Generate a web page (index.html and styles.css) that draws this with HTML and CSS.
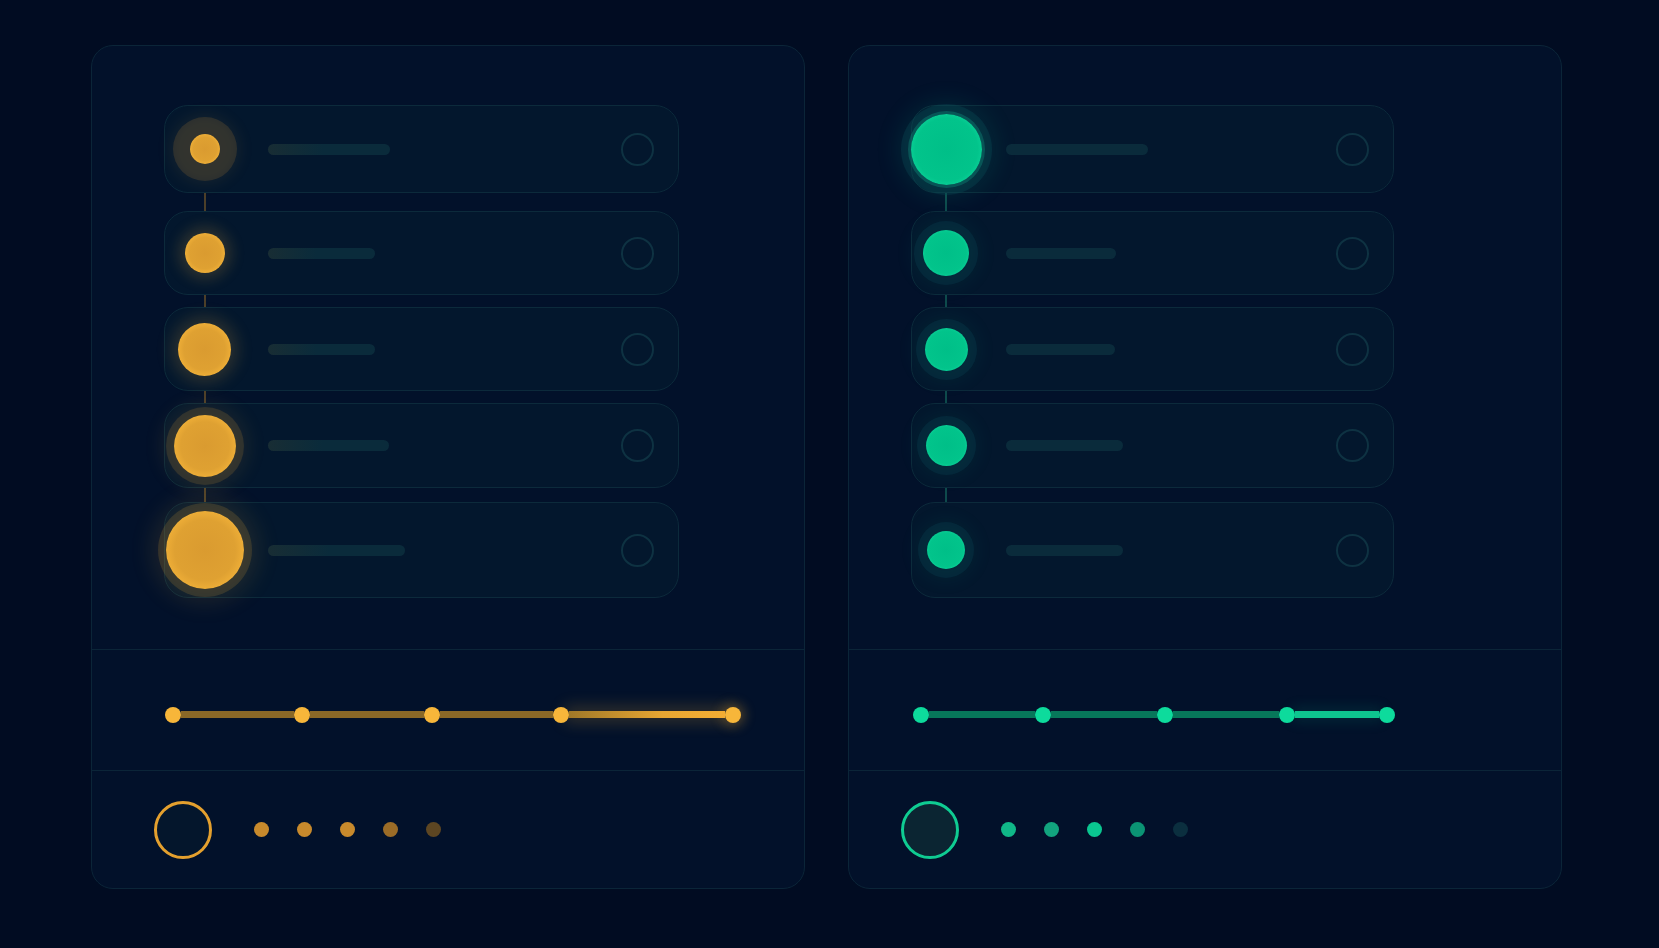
FILE: index.html
```html
<!DOCTYPE html>
<html lang="es">
<head>
    <meta charset="UTF-8">
    <meta name="viewport" content="width=device-width, initial-scale=1.0">
    <title>Pasos</title>
    <link rel="stylesheet" href="styles.css">
</head>
<body>
    <div class="tablero">
        <!-- panel ambar -->
        <section class="panel ambar">
            <div class="lista">
                <div class="fila f1">
                    <span class="hueco"><span class="punto p1"></span></span>
                    <span class="barra" style="width: 122px;"></span>
                    <span class="aro"></span>
                </div>
                <div class="fila f2">
                    <span class="hueco"><span class="punto p2"></span></span>
                    <span class="barra" style="width: 107px;"></span>
                    <span class="aro"></span>
                </div>
                <div class="fila f3">
                    <span class="hueco"><span class="punto p3"></span></span>
                    <span class="barra" style="width: 107px;"></span>
                    <span class="aro"></span>
                </div>
                <div class="fila f4">
                    <span class="hueco"><span class="punto p4"></span></span>
                    <span class="barra" style="width: 121px;"></span>
                    <span class="aro"></span>
                </div>
                <div class="fila f5">
                    <span class="hueco"><span class="punto p5"></span></span>
                    <span class="barra" style="width: 137px;"></span>
                    <span class="aro"></span>
                </div>
            </div>
            <div class="deslizador">
                <div class="pista">
                    <span class="nodo"></span><span class="tramo"></span>
                    <span class="nodo"></span><span class="tramo"></span>
                    <span class="nodo"></span><span class="tramo"></span>
                    <span class="nodo"></span><span class="tramo final"></span>
                    <span class="nodo ultimo"></span>
                </div>
            </div>
            <div class="pie">
                <span class="anillo"></span>
                <div class="puntos">
                    <span class="d1"></span>
                    <span class="d2"></span>
                    <span class="d3"></span>
                    <span class="d4"></span>
                    <span class="d5"></span>
                </div>
            </div>
        </section>

        <!-- panel verde -->
        <section class="panel verde">
            <div class="lista">
                <div class="fila f1">
                    <span class="hueco"><span class="punto p1"></span></span>
                    <span class="barra" style="width: 142px;"></span>
                    <span class="aro"></span>
                </div>
                <div class="fila f2">
                    <span class="hueco"><span class="punto p2"></span></span>
                    <span class="barra" style="width: 110px;"></span>
                    <span class="aro"></span>
                </div>
                <div class="fila f3">
                    <span class="hueco"><span class="punto p3"></span></span>
                    <span class="barra" style="width: 109px;"></span>
                    <span class="aro"></span>
                </div>
                <div class="fila f4">
                    <span class="hueco"><span class="punto p4"></span></span>
                    <span class="barra" style="width: 117px;"></span>
                    <span class="aro"></span>
                </div>
                <div class="fila f5">
                    <span class="hueco"><span class="punto p5"></span></span>
                    <span class="barra" style="width: 117px;"></span>
                    <span class="aro"></span>
                </div>
            </div>
            <div class="deslizador">
                <div class="pista">
                    <span class="nodo"></span><span class="tramo"></span>
                    <span class="nodo"></span><span class="tramo"></span>
                    <span class="nodo"></span><span class="tramo"></span>
                    <span class="nodo"></span><span class="tramo final"></span>
                    <span class="nodo ultimo"></span>
                </div>
            </div>
            <div class="pie">
                <span class="anillo"></span>
                <div class="puntos">
                    <span class="d1"></span>
                    <span class="d2"></span>
                    <span class="d3"></span>
                    <span class="d4"></span>
                    <span class="d5"></span>
                </div>
            </div>
        </section>
    </div>
</body>
</html>
```

FILE: styles.css
```css
body {
    font-family: 'Liberation Sans', sans-serif;
    background: #010c22;
    margin: 0;
    height: 948px;
    overflow: hidden;
}

.tablero {
    display: flex;
    gap: 43px;
    padding: 45px 0 0 91px;
}

.panel {
    width: 714px;
    height: 844px;
    box-sizing: border-box;
    border: 1px solid #0b2538;
    border-radius: 22px;
    background: #02112a;
    display: flex;
    flex-direction: column;
    overflow: hidden;
}

/* lista de pasos */
.lista {
    position: relative;
    flex: none;
    height: 603px;
    box-sizing: border-box;
    display: flex;
    flex-direction: column;
    gap: 12px;
}

.ambar .lista {
    padding: 59px 125px 0 72px;
}

.verde .lista {
    padding: 59px 167px 0 62px;
}

/* linea que une los pasos */
.lista::before {
    content: "";
    position: absolute;
    top: 103px;
    height: 401px;
    width: 2px;
}

.ambar .lista::before {
    left: 112px;
    background: #4c3f29;
}

.verde .lista::before {
    left: 96px;
    background: #0e4a4c;
}

.fila {
    position: relative;
    z-index: 1;
    display: flex;
    align-items: center;
    box-sizing: border-box;
    background: #03172d;
    border: 1.5px solid #0c2a3b;
    border-radius: 24px;
    padding-right: 24px;
    flex: none;
}

.f1 { height: 88px; margin-bottom: 6px; }
.f2 { height: 84px; }
.f3 { height: 84px; }
.f4 { height: 85px; margin-bottom: 2px; }
.f5 { height: 96px; }

.hueco {
    flex: none;
    display: flex;
    justify-content: center;
    align-items: center;
}

.ambar .hueco { width: 79px; }
.verde .hueco { width: 68px; }

.barra {
    flex: none;
    height: 11px;
    border-radius: 6px;
    background: #0a2b3b;
}

.ambar .barra {
    margin-left: 24px;
    background: linear-gradient(90deg, #182d34 0%, #0a2b3b 45%);
}

.verde .barra {
    margin-left: 26px;
}

.aro {
    margin-left: auto;
    width: 33px;
    height: 33px;
    box-sizing: border-box;
    border: 2px solid #0e3242;
    border-radius: 50%;
}

/* circulos */
.punto {
    flex: none;
    border-radius: 50%;
}

.ambar .punto {
    background: radial-gradient(circle, #da9b30 0%, #dfa132 55%, #f5b43a 80%, #fcbd3c 100%);
}

.ambar .p1 {
    width: 30px;
    height: 30px;
    box-shadow: 0 0 0 17px rgba(160, 120, 50, 0.22), 0 0 16px 20px rgba(240, 170, 60, 0.08);
}

.ambar .p2 {
    width: 40px;
    height: 40px;
    box-shadow: 0 0 14px 7px rgba(240, 170, 60, 0.17);
}

.ambar .p3 {
    width: 53px;
    height: 53px;
    box-shadow: 0 0 16px 7px rgba(240, 170, 60, 0.17);
}

.ambar .p4 {
    width: 62px;
    height: 62px;
    box-shadow: 0 0 0 8px rgba(160, 120, 50, 0.22), 0 0 20px 12px rgba(240, 170, 60, 0.1);
}

.ambar .p5 {
    width: 78px;
    height: 78px;
    box-shadow: 0 0 0 8px rgba(160, 120, 50, 0.24), 0 0 24px 14px rgba(240, 170, 60, 0.12);
}

.verde .punto {
    width: 46px;
    height: 46px;
    background: radial-gradient(circle, #00bf88 0%, #02c48b 62%, #10d9a0 84%, #2af0ba 100%);
    box-shadow: 0 0 0 9px rgba(8, 62, 76, 0.35), 0 0 20px 12px rgba(20, 200, 160, 0.06);
}

.verde .p1 {
    width: 71px;
    height: 71px;
    box-shadow: 0 0 0 3px rgba(20, 170, 140, 0.3), 0 0 0 10px rgba(8, 70, 80, 0.4), 0 0 26px 12px rgba(20, 200, 160, 0.12);
}

.verde .p3 { width: 43px; height: 43px; }
.verde .p4 { width: 41px; height: 41px; }
.verde .p5 { width: 38px; height: 38px; }

/* deslizador */
.deslizador {
    flex: none;
    height: 121px;
    box-sizing: border-box;
    border-top: 1px solid #0b2538;
    display: flex;
    align-items: center;
    padding-top: 9px;
}

.ambar .deslizador { padding-left: 73px; }
.verde .deslizador { padding-left: 64px; }

.pista {
    display: flex;
    align-items: center;
}

.ambar .pista { width: 576px; }
.verde .pista { width: 482px; }

.nodo {
    position: relative;
    z-index: 1;
    flex: none;
    width: 16px;
    height: 16px;
    border-radius: 50%;
}

.tramo {
    flex: 1;
    height: 7px;
}

.ambar .nodo { background: #f7b63a; }
.ambar .tramo { background: #8a6827; }
.ambar .tramo.final {
    flex: none;
    width: 156px;
    background: linear-gradient(90deg, #a07828 0%, #e8a632 60%, #f5ae34 100%);
    box-shadow: 0 0 16px 5px rgba(240, 170, 50, 0.2);
}
.ambar .nodo.ultimo { box-shadow: 0 0 12px 4px rgba(240, 170, 50, 0.3); }

.verde .nodo { background: #0ddb9c; }
.verde .tramo { background: #07775a; }
.verde .tramo.final {
    flex: none;
    width: 84px;
    background: #0ec58f;
    box-shadow: 0 0 14px 4px rgba(20, 200, 150, 0.12);
}

/* pie */
.pie {
    flex: 1;
    border-top: 1px solid #0b2538;
    display: flex;
    align-items: center;
}

.ambar .pie { padding-left: 62px; }
.verde .pie { padding-left: 52px; }

.anillo {
    flex: none;
    width: 58px;
    height: 58px;
    box-sizing: border-box;
    border: 3px solid;
    border-radius: 50%;
}

.ambar .anillo {
    border-color: #e4a02e;
    background: #04162c;
}

.verde .anillo {
    border-color: #0fcc92;
    background: #0b2532;
}

.puntos {
    display: flex;
    gap: 28px;
    margin-left: 42px;
}

.puntos span {
    width: 15px;
    height: 15px;
    border-radius: 50%;
}

.ambar .d1, .ambar .d2, .ambar .d3 { background: #c88a2c; }
.ambar .d4 { background: #9b6c27; }
.ambar .d5 { background: #5d4622; }

.verde .d1 { background: #10b888; }
.verde .d2 { background: #12a47e; }
.verde .d3 { background: #0ac690; }
.verde .d4 { background: #0b9474; }
.verde .d5 { background: #0b2f3f; }
```
